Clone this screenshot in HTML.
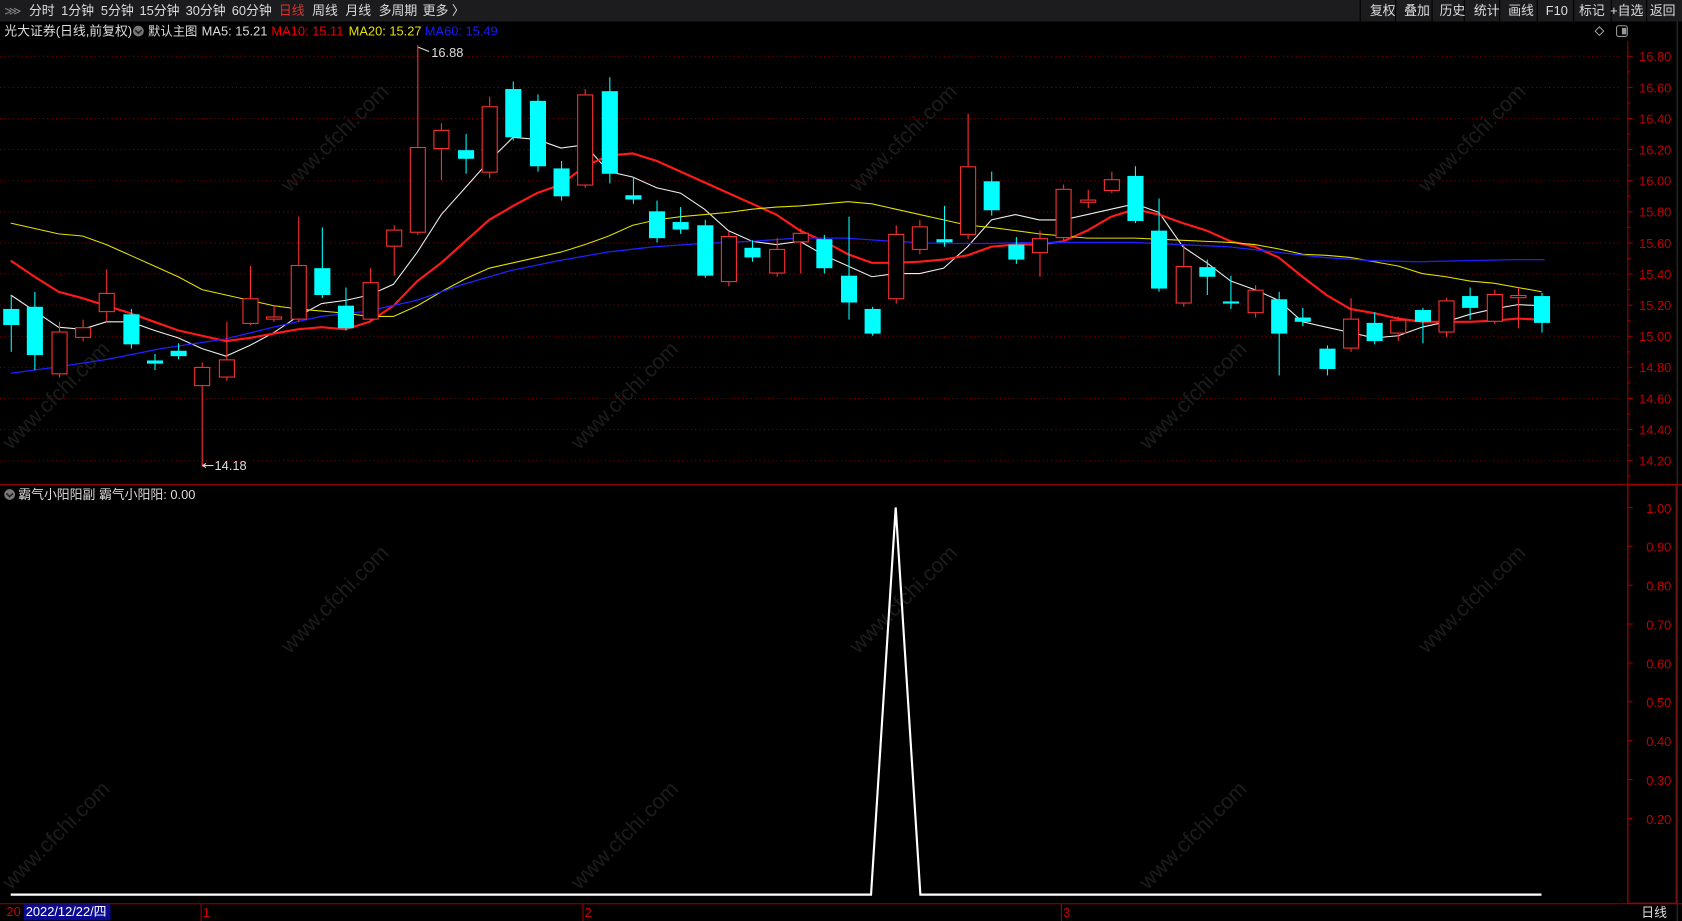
<!DOCTYPE html>
<html><head><meta charset="utf-8"><style>
html,body{margin:0;padding:0;background:#000;width:1682px;height:921px;overflow:hidden}
#w{width:1568px;height:859px;transform:scale(1.07270);transform-origin:0 0;position:relative;font-family:"Liberation Sans","Noto Sans CJK SC",sans-serif}
svg text{font-family:"Liberation Sans","Noto Sans CJK SC",sans-serif}
</style></head><body><div id="w">
<svg id="s" width="1568" height="859" viewBox="0 0 1568 859" xmlns="http://www.w3.org/2000/svg">
<rect width="1568" height="859" fill="#000"/>
<rect width="1568" height="20" fill="#1c1c1e"/>
<g font-size="12" fill="#ddd">
<text x="4" y="14" fill="#888" font-size="11">⋙</text>
<text x="27" y="14">分时</text><text x="57" y="14">1分钟</text><text x="94" y="14">5分钟</text><text x="130" y="14">15分钟</text><text x="173" y="14">30分钟</text><text x="216" y="14">60分钟</text>
<text x="260" y="14" fill="#e03030">日线</text><text x="291" y="14">周线</text><text x="322" y="14">月线</text><text x="353" y="14">多周期</text><text x="394" y="14">更多 〉</text>
</g>
<g font-size="12" fill="#ddd">
<line x1="1365" y1="0" x2="1365" y2="20" stroke="#000"/><line x1="1398" y1="0" x2="1398" y2="20" stroke="#000"/><line x1="1433" y1="0" x2="1433" y2="20" stroke="#000"/><line x1="1467" y1="0" x2="1467" y2="20" stroke="#000"/><line x1="1502" y1="0" x2="1502" y2="20" stroke="#000"/><line x1="1535" y1="0" x2="1535" y2="20" stroke="#000"/><line x1="1268" y1="0" x2="1268" y2="20" stroke="#000"/><line x1="1301" y1="0" x2="1301" y2="20" stroke="#000"/><line x1="1335" y1="0" x2="1335" y2="20" stroke="#000"/>
<text x="1277" y="14">复权</text><text x="1309" y="14">叠加</text><text x="1342" y="14">历史</text><text x="1374" y="14">统计</text><text x="1406" y="14">画线</text><text x="1441" y="14">F10</text><text x="1472" y="14">标记</text><text x="1501" y="14">+自选</text><text x="1538" y="14">返回</text>
</g>
<g font-size="12">
<text x="4" y="33" fill="#ddd">光大证券(日线,前复权)</text>
<circle cx="129" cy="29" r="5" fill="#777"/><path d="M126 28l3 3 3-3" stroke="#222" fill="none" stroke-width="1.5"/>
<text x="138" y="33" fill="#ddd" font-size="11.5">默认主图</text>
<text x="188" y="33" fill="#ddd">MA5: 15.21</text>
<text x="253" y="33" fill="#e00">MA10: 15.11</text>
<text x="325" y="33" fill="#e8e000">MA20: 15.27</text>
<text x="396" y="33" fill="#1a1aff">MA60: 15.49</text>
<text x="17" y="465" fill="#ddd">霸气小阳阳副 霸气小阳阳: 0.00</text>
<circle cx="9" cy="461" r="5" fill="#777"/><path d="M6 460l3 3 3-3" stroke="#222" fill="none" stroke-width="1.5"/>
</g>
<path d="M1491 25l4 4-4 4-4-4z" stroke="#999" fill="none"/>
<rect x="1507" y="24" width="10" height="10" rx="2" stroke="#999" fill="none"/><rect x="1512" y="26" width="4" height="6" fill="#999"/>
<g id="grid"></g>
<line x1="1517.5" y1="38" x2="1517.5" y2="842" stroke="#a00000"/>
<line x1="0" y1="451.5" x2="1568" y2="451.5" stroke="#a00000"/>
<line x1="0" y1="842.5" x2="1568" y2="842.5" stroke="#a00000"/>
<rect x="1517.5" y="452" width="45" height="390" stroke="#a00000" fill="none"/>
<line x1="1563.5" y1="20" x2="1563.5" y2="859" stroke="#333"/>
<g id="wm" font-size="20" fill="#1c1c1c"></g>
<g id="ma" fill="none"></g>
<g id="cd"></g>
<text x="402" y="53" font-size="12" fill="#ddd">16.88</text><path d="M390 44l10 4" stroke="#ddd"/>
<text x="200" y="438" font-size="12" fill="#ddd">14.18</text><path d="M189 434h10" stroke="#ddd"/><path d="M192 432l-3 2 3 2" stroke="#ddd" fill="none"/>
<polyline points="10,834 812,834 835,473 858,834 1437,834" stroke="#fff" stroke-width="2" fill="none"/>
<g font-size="12">
<text x="6" y="854" fill="#c00">20</text>
<rect x="22" y="843" width="81" height="15" fill="#0a0a90"/>
<text x="24" y="854" fill="#fff">2022/12/22/四</text>
<line x1="187.5" y1="843" x2="187.5" y2="859" stroke="#a00000"/><text x="189" y="855" fill="#c00">1</text>
<line x1="543.5" y1="843" x2="543.5" y2="859" stroke="#a00000"/><text x="545" y="855" fill="#c00">2</text>
<line x1="989.5" y1="843" x2="989.5" y2="859" stroke="#a00000"/><text x="991" y="855" fill="#c00">3</text>
<text x="1530" y="855" fill="#ddd">日线</text>
</g>
</svg></div>
<script>
var N="http://www.w3.org/2000/svg";
function el(p,t,a,tx){var e=document.createElementNS(N,t);for(var k in a)e.setAttribute(k,a[k]);if(tx)e.textContent=tx;document.getElementById(p).appendChild(e);return e;}
var pl=["16.80","16.60","16.40","16.20","16.00","15.80","15.60","15.40","15.20","15.00","14.80","14.60","14.40","14.20"];
pl.forEach(function(t,i){var y=52+i*29;el("grid","line",{x1:0,y1:y+.5,x2:1512,y2:y+.5,stroke:"#800000","stroke-dasharray":"1,3"});el("grid","line",{x1:1517,y1:y+.5,x2:1522,y2:y+.5,stroke:"#a00000"});el("grid","line",{x1:1517,y1:y+15,x2:1520,y2:y+15,stroke:"#a00000"});el("grid","text",{x:1558,y:y+5,"font-size":"12",fill:"#c00000","text-anchor":"end"},t);});
for(var i=0;i<9;i++){var y=473+i*36.25;var t=(1-i*0.1).toFixed(2);el("grid","line",{x1:1517,y1:y,x2:1522,y2:y,stroke:"#a00000"});el("grid","text",{x:1558,y:y+5,"font-size":"12",fill:"#c00000","text-anchor":"end"},t);}
var wp=[[10,420],[10,830],[270,180],[270,610],[540,420],[540,830],[800,180],[800,610],[1070,420],[1070,830],[1330,180],[1330,610],[-250,610]];
wp.forEach(function(p){el("wm","text",{x:p[0],y:p[1],transform:"rotate(-45 "+p[0]+" "+p[1]+")"},"www.cfchi.com");});
var C=[["c",288,303,275,328],["c",286,331,272,345],["r",309,349,300,352],["r",305,315,298,318],["r",273,291,251,300],["c",293,321,288,325],["c",336,339,330,345],["c",327,332,320,335],["r",342,360,338,435],["r",335,352,300,355],["r",278,302,248,303],["r",295,298,285,300],["r",247,298,202,300],["c",250,275,212,278],["c",285,306,268,308],["r",263,298,250,300],["r",214,230,210,257],["r",137,217,42,219],["r",121,139,115,168],["c",140,148,125,162],["r",99,161,90,166],["c",83,128,76,131],["c",94,155,88,160],["c",157,183,150,187],["r",88,173,83,175],["c",85,162,72,171],["c",182,186,165,190],["c",197,222,187,226],["c",207,214,193,218],["c",210,257,205,259],["r",220,263,216,267],["c",231,240,224,244],["r",232,255,222,258],["r",217,226,213,255],["c",223,250,219,255],["c",257,282,202,298],["c",288,311,286,313],["r",218,279,210,283],["r",211,233,205,237],["c",223,226,192,230],["r",155,219,106,223],["c",169,196,160,201],["c",228,242,221,246],["r",222,236,215,258],["r",176,222,172,224],["r",186,189,177,194],["r",167,178,160,180],["c",164,206,155,208],["c",215,269,185,272],["r",248,283,228,286],["c",249,258,242,275],["c",281,283,257,288],["r",270,292,266,296],["c",279,311,272,350],["c",296,300,287,304],["c",325,344,322,350],["r",297,325,278,328],["c",301,318,291,321],["r",298,311,295,318],["c",289,300,287,320],["r",280,310,278,314],["c",276,287,268,298],["r",274,300,270,302],["r",275,278,268,306],["c",276,301,273,310]];
C.forEach(function(c,i){var x=Math.round(10+i*22.3);var col=c[0]=="c"?"#00ffff":"#ff3232";
if(c[0]=="c"){el("cd","line",{x1:x+.5,y1:c[3],x2:x+.5,y2:c[4],stroke:col});el("cd","rect",{x:x-7,y:c[1],width:15,height:Math.max(2,c[2]-c[1]),fill:col});}
else{el("cd","line",{x1:x+.5,y1:c[3],x2:x+.5,y2:c[1],stroke:col});el("cd","line",{x1:x+.5,y1:c[2],x2:x+.5,y2:c[4],stroke:col});el("cd","rect",{x:x-6.5,y:c[1]+.5,width:14,height:Math.max(1,c[2]-c[1]-1),fill:"#000",stroke:col});}});
function L(ys,col,w){var pts=ys.map(function(y,i){return (10+i*22.3)+","+y}).join(" ");el("ma","polyline",{points:pts,stroke:col,"stroke-width":w});}
L([275,290,305,307,300,300,308,315,325,332,322,310,295,283,280,275,265,235,200,175,150,128,130,138,135,160,165,175,180,195,215,225,228,225,238,248,258,255,255,250,230,205,200,205,205,200,195,190,198,230,245,262,270,280,300,305,310,315,313,305,300,293,288,284,285],"#eee",1);
L([243,258,272,278,285,292,300,308,313,318,315,311,307,305,307,300,285,262,245,225,205,192,180,172,155,145,143,150,160,170,180,190,200,215,225,237,245,245,244,242,238,230,228,228,225,215,202,195,200,208,215,225,230,240,258,275,288,292,297,300,300,300,299,297,298],"#ff1a1a",2);
L([208,213,218,220,228,238,248,258,270,275,280,285,288,290,292,295,295,285,272,260,250,245,240,235,228,220,210,205,202,200,198,195,193,192,190,188,190,195,200,205,210,212,215,218,220,222,222,222,223,224,225,226,228,232,237,238,240,244,248,255,258,262,264,268,272],"#e0e000",1);
el("ma","polyline",{points:"10,348 54,342 100,335 150,325 210,316 255,305 299,295 343,290 388,280 432,265 477,252 521,243 566,235 610,230 655,227 699,225 744,222 788,222 833,225 877,227 922,227 967,226 1011,226 1056,226 1100,228 1145,230 1189,235 1234,240 1278,243 1323,244 1367,243 1412,242 1440,242",stroke:"#2020ff","stroke-width":1.2});
</script>
</body></html>
